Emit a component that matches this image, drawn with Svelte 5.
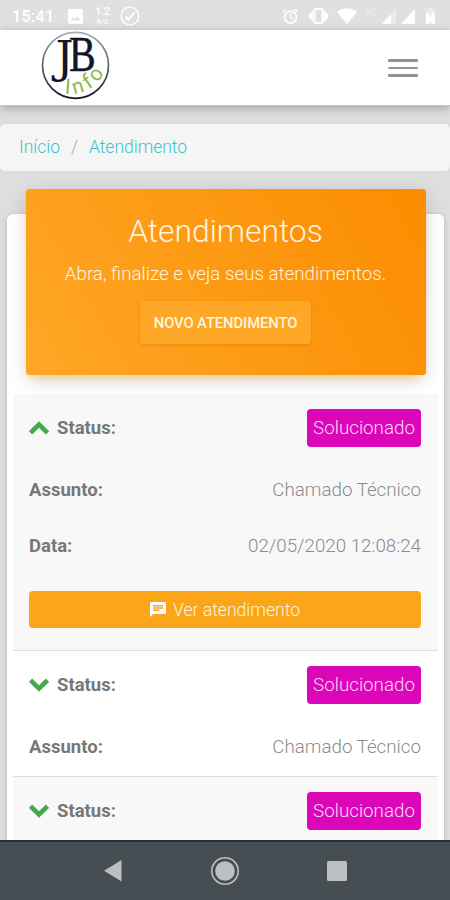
<script>
	let open = $state([true, false, false]);
	let menu = $state(false);

	const tickets = [
		{ status: "Solucionado", subject: "Chamado Técnico", date: "02/05/2020 12:08:24" },
		{ status: "Solucionado", subject: "Chamado Técnico" },
		{ status: "Solucionado" },
	];

	function toggle(i) {
		open[i] = !open[i];
	}
</script>

<div class="screen">
	<div class="statusbar">
		<span class="clock">15:41</span>
		<svg class="image" width="15" height="15" viewBox="0 0 15 15">
			<path fill-rule="evenodd" d="M2 0h11a2 2 0 0 1 2 2v11a2 2 0 0 1-2 2H2a2 2 0 0 1-2-2V2a2 2 0 0 1 2-2zM2.500 11.500h10L9.400 7.500 7 10 5 8.500z" />
		</svg>
		<span class="rate"><b>1.2</b><small>K/S</small></span>
		<svg class="check" width="20" height="20" viewBox="0 0 20 20">
			<circle cx="10" cy="10" r="8.800" fill="none" stroke="#fff" stroke-width="1.500" />
			<path d="M5.500 10.500l3 3 6-7" fill="none" stroke="#fff" stroke-width="2" />
		</svg>
		<div class="right">
			<svg width="17" height="17" viewBox="0 0 17 17" fill="none" stroke="#fff">
				<circle cx="8.500" cy="9.200" r="6" stroke-width="1.700" />
				<path d="M8.500 5.500v4l2.800 1.700M1 4l3.300-2.700M16 4l-3.300-2.700" stroke-width="1.400" />
			</svg>
			<svg class="vibrate" width="21" height="16" viewBox="0 0 21 16">
				<rect x="6.500" y="1" width="8" height="14" rx="1" fill="none" stroke="#fff" stroke-width="2" />
				<path d="M5 2v12L0 8zM16 2v12l5-6z" />
			</svg>
			<svg class="wifi" width="20" height="16" viewBox="0 0 20 16"><path d="M0 4Q10-3.500 20 4L10 16z" /></svg>
			<span class="net">4G</span>
			<svg class="signal" width="14" height="15" viewBox="0 0 14 15">
				<path d="M14 0v15H0z" opacity=".35" /><path d="M9 5.500V15H0z" />
			</svg>
			<svg class="signal2" width="14" height="15" viewBox="0 0 14 15"><path d="M14 0v15H0z" /></svg>
			<svg class="battery" width="9" height="16" viewBox="0 0 9 16">
				<path d="M2.500 0h4v2H9v14H0V2h2.500z" opacity=".4" />
				<path d="M0 6l2.500-1L4.500 9l2-4L9 6v10H5.500v-3h-2v3H0z" />
			</svg>
		</div>
	</div>

	<header>
		<svg class="logo" width="70" height="70" viewBox="0 0 70 70">
			<defs>
				<linearGradient id="ring" x2="0" y2="1">
					<stop offset="0" stop-color="#aaa" />
					<stop offset="1" stop-color="#111522" />
				</linearGradient>
			</defs>
			<circle cx="34.500" cy="34.300" r="33" fill="#fff" stroke="url(#ring)" stroke-width="1.700" />
			<text class="j" transform="translate(14.500 42)">J</text>
			<text class="b" transform="translate(28 39.500) scale(.8 1)">B</text>
			<g class="info">
				<text transform="translate(23.500 62.500) rotate(4)">I</text>
				<text transform="translate(33 63.500) rotate(-16)">n</text>
				<text transform="translate(47.500 58.500) rotate(-34)">f</text>
				<text transform="translate(56.500 52) rotate(-54)">o</text>
			</g>
		</svg>
		<button class="burger" aria-label="Menu" onclick={() => (menu = !menu)}>
			<i></i><i></i><i></i>
		</button>
	</header>

	<main>
		<nav class="breadcrumb">
			<span>Início</span><span class="slash">/</span><span>Atendimento</span>
		</nav>

		<section class="card">
			<div class="hero">
				<h1>Atendimentos</h1>
				<p>Abra, finalize e veja seus atendimentos.</p>
				<button class="new">NOVO ATENDIMENTO</button>
			</div>

			<div class="table">
				{#each tickets as ticket, i}
					<div class="ticket">
						<div class="row status">
							<button class="toggle" onclick={() => toggle(i)}>
								<svg class:up={open[i]} width="20" height="14" viewBox="0 0 20 14">
									<path d="M1.500 2.200L10 10.500l8.500-8.300" />
								</svg>
								<span>Status:</span>
							</button>
							<span class="badge">{ticket.status}</span>
						</div>
						{#if ticket.subject}
							<div class="row"><b>Assunto:</b><span class="value">{ticket.subject}</span></div>
						{/if}
						{#if open[i] && ticket.date}
							<div class="row"><b>Data:</b><span class="value">{ticket.date}</span></div>
							<button class="view">
								<svg width="16" height="15" viewBox="0 0 16 15">
									<path fill="#fff" d="M1.500 0h13A1.500 1.500 0 0 1 16 1.500v9a1.500 1.500 0 0 1-1.500 1.500H3l-3 3V1.500A1.500 1.500 0 0 1 1.500 0z" />
									<path stroke="#fba618" stroke-width="1.500" d="M3 3.800h10M3 6h10M3 8.200h6.500" />
								</svg>
								<span>Ver atendimento</span>
							</button>
						{/if}
					</div>
				{/each}
			</div>
		</section>
	</main>

	<footer>
		<svg width="18" height="22" viewBox="0 0 18 22"><path d="M17.500 0v21.500L0 10.700z" /></svg>
		<svg width="30" height="30" viewBox="0 0 30 30">
			<circle cx="15" cy="15" r="9.800" />
			<circle cx="15" cy="15" r="13.200" fill="none" stroke="#bbc1c2" stroke-width="1.600" />
		</svg>
		<svg width="20" height="20" viewBox="0 0 20 20"><rect width="20" height="20" rx="1.500" /></svg>
	</footer>
</div>

<style>
	:global(body) {
		margin: 0;
	}

	.screen {
		width: 450px;
		height: 900px;
		display: flex;
		flex-direction: column;
		overflow: hidden;
		background: #dedede;
		font-family: Roboto, "Liberation Sans", sans-serif;
		font-weight: 300;
		font-size: 18.75px;
		color: #777;
	}

	svg {
		display: block;
		flex: none;
	}

	button {
		font: inherit;
		color: inherit;
		border: 0;
		padding: 0;
		background: none;
	}

	.statusbar {
		flex: none;
		height: 30px;
		box-sizing: border-box;
		padding: 2px 15px 0 12px;
		display: flex;
		align-items: center;
		background: #e0e0e0;
		color: #fff;
		fill: #fff;
	}

	.clock {
		width: 56px;
		font-size: 16px;
		font-weight: 500;
		letter-spacing: 0.4px;
	}

	.rate {
		width: 17px;
		margin: 0 9px 0 11px;
		display: flex;
		flex-direction: column;
		align-items: center;
		font-size: 10px;
		line-height: 12px;
	}

	.rate b {
		font-weight: 500;
	}

	.rate small {
		font-size: 7px;
		line-height: 9px;
		font-weight: 500;
	}

	.right {
		margin-left: auto;
		display: flex;
		align-items: center;
	}

	.vibrate {
		margin-left: 9px;
	}

	.wifi {
		margin-left: 8px;
	}

	.net {
		width: 16px;
		margin: -7px 2px 0 7px;
		font-size: 10px;
		opacity: 0.6;
	}

	.signal2 {
		margin-left: 5px;
	}

	.battery {
		margin-left: 11px;
	}

	header {
		flex: none;
		height: 76px;
		box-sizing: border-box;
		padding: 0 32px 0 41px;
		display: flex;
		justify-content: space-between;
		align-items: center;
		background: #fff;
		border-bottom: 1px solid #c6c6c6;
		box-shadow: 0 2px 9px rgba(0, 0, 0, 0.28);
		z-index: 1;
	}

	.logo {
		margin-bottom: 4px;
	}

	.j {
		font: 45px "DejaVu Serif", serif;
		fill: #12152b;
	}

	.b {
		font: 50px "Liberation Serif", serif;
		fill: #12152b;
		stroke: #12152b;
		stroke-width: 0.5px;
	}

	.info text {
		font: 400 21px Roboto, sans-serif;
		fill: #8dba4b;
	}

	.burger {
		width: 30px;
		margin-top: 1px;
		display: flex;
		flex-direction: column;
		gap: 5px;
	}

	.burger i {
		height: 2.5px;
		border-radius: 1px;
		background: #929292;
	}

	main {
		flex: 1;
		min-height: 0;
		overflow: hidden;
		padding-top: 18px;
	}

	.breadcrumb {
		height: 47px;
		box-sizing: border-box;
		padding: 0 19px 1px;
		display: flex;
		align-items: center;
		border-radius: 5px;
		background: #f5f5f5;
		color: #3ebfd1;
		font-size: 17.5px;
	}

	.slash {
		margin: 0 11px;
		color: #aaa;
	}

	.card {
		margin: 43px 6px 0 7px;
		padding: 0 6px;
		border-radius: 6px 6px 0 0;
		background: #fff;
		box-shadow: 0 1px 5px rgba(0, 0, 0, 0.18);
		display: flow-root;
	}

	.hero {
		position: relative;
		height: 186px;
		box-sizing: border-box;
		margin: -25px 12.5px 0 12.5px;
		padding-top: 22px;
		display: flex;
		flex-direction: column;
		align-items: center;
		border-radius: 3px;
		background: linear-gradient(60deg, #ffa726, #fb8c00);
		box-shadow: 0 5px 20px rgba(0, 0, 0, 0.13), 0 7px 12px -5px rgba(255, 152, 0, 0.4);
		color: #fff4df;
	}

	h1 {
		margin: 0;
		font-size: 31.8px;
		line-height: 40px;
		font-weight: 300;
	}

	p {
		margin: 10px 0 0;
		font-size: 18.75px;
		line-height: 26px;
		white-space: nowrap;
	}

	.new {
		width: 171px;
		height: 43px;
		margin-top: 14px;
		border-radius: 4px;
		background: #ffa726;
		box-shadow: 0 1px 3px rgba(190, 100, 0, 0.35);
		font-size: 14.8px;
		font-weight: 500;
		letter-spacing: -0.1px;
		white-space: nowrap;
	}

	.table {
		margin-top: 19px;
	}

	.ticket {
		border-bottom: 1px solid #ddd;
		padding: 0 17px 1px 16px;
	}

	.ticket:nth-child(odd) {
		background: #f8f8f8;
	}

	.row {
		height: 56px;
		display: flex;
		align-items: center;
		justify-content: space-between;
	}

	.row b,
	.toggle {
		font-size: 18.5px;
		font-weight: 700;
	}

	.row.status {
		height: 68px;
	}

	.toggle {
		display: flex;
		align-items: center;
		gap: 8px;
	}

	.toggle path {
		fill: none;
		stroke: #43ab4d;
		stroke-width: 4.6;
	}

	.up {
		transform: rotate(180deg);
	}

	.value {
		color: #8b8b8b;
	}

	.badge {
		width: 114px;
		height: 38px;
		display: flex;
		align-items: center;
		justify-content: center;
		border-radius: 4px;
		background: #dc06b9;
		color: #ffd9f8;
	}

	.view {
		width: 100%;
		height: 37px;
		margin: 17px 0 21px;
		display: flex;
		align-items: center;
		justify-content: center;
		gap: 7px;
		border-radius: 4px;
		background: #fba618;
		color: #fff3dc;
		font-size: 17.6px;
	}

	footer {
		flex: none;
		height: 60px;
		box-sizing: border-box;
		padding: 0 103px 0 104px;
		display: flex;
		align-items: center;
		justify-content: space-between;
		border-top: 2px solid #1e343a;
		background: #464d53;
		fill: #bbc1c2;
	}
</style>
